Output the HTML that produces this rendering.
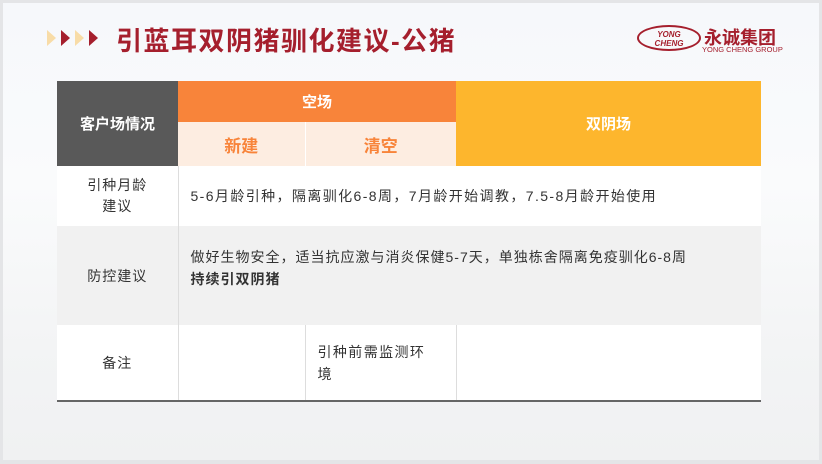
<!DOCTYPE html>
<html><head><meta charset="utf-8"><style>
*{margin:0;padding:0;box-sizing:border-box}
body{width:822px;height:464px;background:#e4e5e7;font-family:"Liberation Sans","Noto Sans CJK SC",sans-serif;position:relative;overflow:hidden}
.page{position:absolute;left:3px;top:3px;width:816px;height:457px;background:linear-gradient(#f6f8fb 0%,#fafbfc 40%,#f3f4f5 75%,#f0f1f2 100%)}
.arr{position:absolute;top:30px;width:0;height:0;border-top:8px solid transparent;border-bottom:8px solid transparent}
.title{position:absolute;top:21px;font-size:26px;font-weight:bold;color:#a51f2d;letter-spacing:1.5px}
table{position:absolute;left:57px;top:81px;border-collapse:collapse;width:704px;font-size:14px;color:#333;letter-spacing:1.4px}
td{text-align:center;vertical-align:middle}
</style></head><body>
<div class="page"></div>
<div class="arr" style="left:47px;border-left:9px solid #f8dca7"></div>
<div class="arr" style="left:61px;border-left:9px solid #a51f2d"></div>
<div class="arr" style="left:75px;border-left:9px solid #f8dca7"></div>
<div class="arr" style="left:89px;border-left:9px solid #a51f2d"></div>
<div class="title" style="left:116px">引蓝耳双阴猪驯化建议-公猪</div>
<div style="position:absolute;left:637px;top:25px;width:64px;height:26px;border:2px solid #a51f2d;border-radius:50%;color:#a51f2d;font-size:8px;font-weight:bold;font-style:italic;text-align:center;line-height:9px;padding-top:3px">YONG<br>CHENG</div>
<div style="position:absolute;left:704px;top:24px;font-size:18px;font-weight:bold;color:#a51f2d">永诚集团</div>
<div style="position:absolute;left:702px;top:45px;font-size:7.5px;color:#a51f2d">YONG CHENG GROUP</div>
<table>
<tr style="height:41px"><td rowspan="2" style="width:121px;background:#595959;color:#fff;font-size:15px;font-weight:bold;letter-spacing:0">客户场情况</td>
<td colspan="2" style="background:#f8843a;color:#fff;font-size:15px;font-weight:bold;letter-spacing:0">空场</td>
<td rowspan="2" style="width:305px;background:#fdb62d;color:#fff;font-size:15px;font-weight:bold;letter-spacing:0">双阴场</td></tr>
<tr style="height:44px"><td style="width:127px;background:#fdede1;color:#f8843a;font-size:17px;font-weight:bold;border-right:1px solid #fff;letter-spacing:0">新建</td><td style="width:151px;background:#fdede1;color:#f8843a;font-size:17px;font-weight:bold;letter-spacing:0">清空</td></tr>
<tr style="height:60px;background:#fff"><td style="line-height:21px;letter-spacing:1px">引种月龄<br>建议</td><td colspan="3" style="text-align:left;padding-left:12px;border-left:1px solid #ddd">5-6月龄引种，隔离驯化6-8周，7月龄开始调教，7.5-8月龄开始使用</td></tr>
<tr style="height:99px;background:#f1f1f1"><td style="letter-spacing:1px">防控建议</td><td colspan="3" style="text-align:left;padding-left:12px;vertical-align:top;padding-top:20px;line-height:22px;border-left:1px solid #ddd;letter-spacing:1px">做好生物安全，适当抗应激与消炎保健5-7天，单独栋舍隔离免疫驯化6-8周<br><b>持续引双阴猪</b></td></tr>
<tr style="height:76px;background:#fff;border-bottom:2px solid #666"><td style="letter-spacing:1px">备注</td><td style="border-left:1px solid #ddd;border-right:1px solid #ddd"></td><td style="text-align:left;padding-left:12px;line-height:22px;border-right:1px solid #ddd">引种前需监测环<br>境</td><td></td></tr>
</table>
</body></html>
